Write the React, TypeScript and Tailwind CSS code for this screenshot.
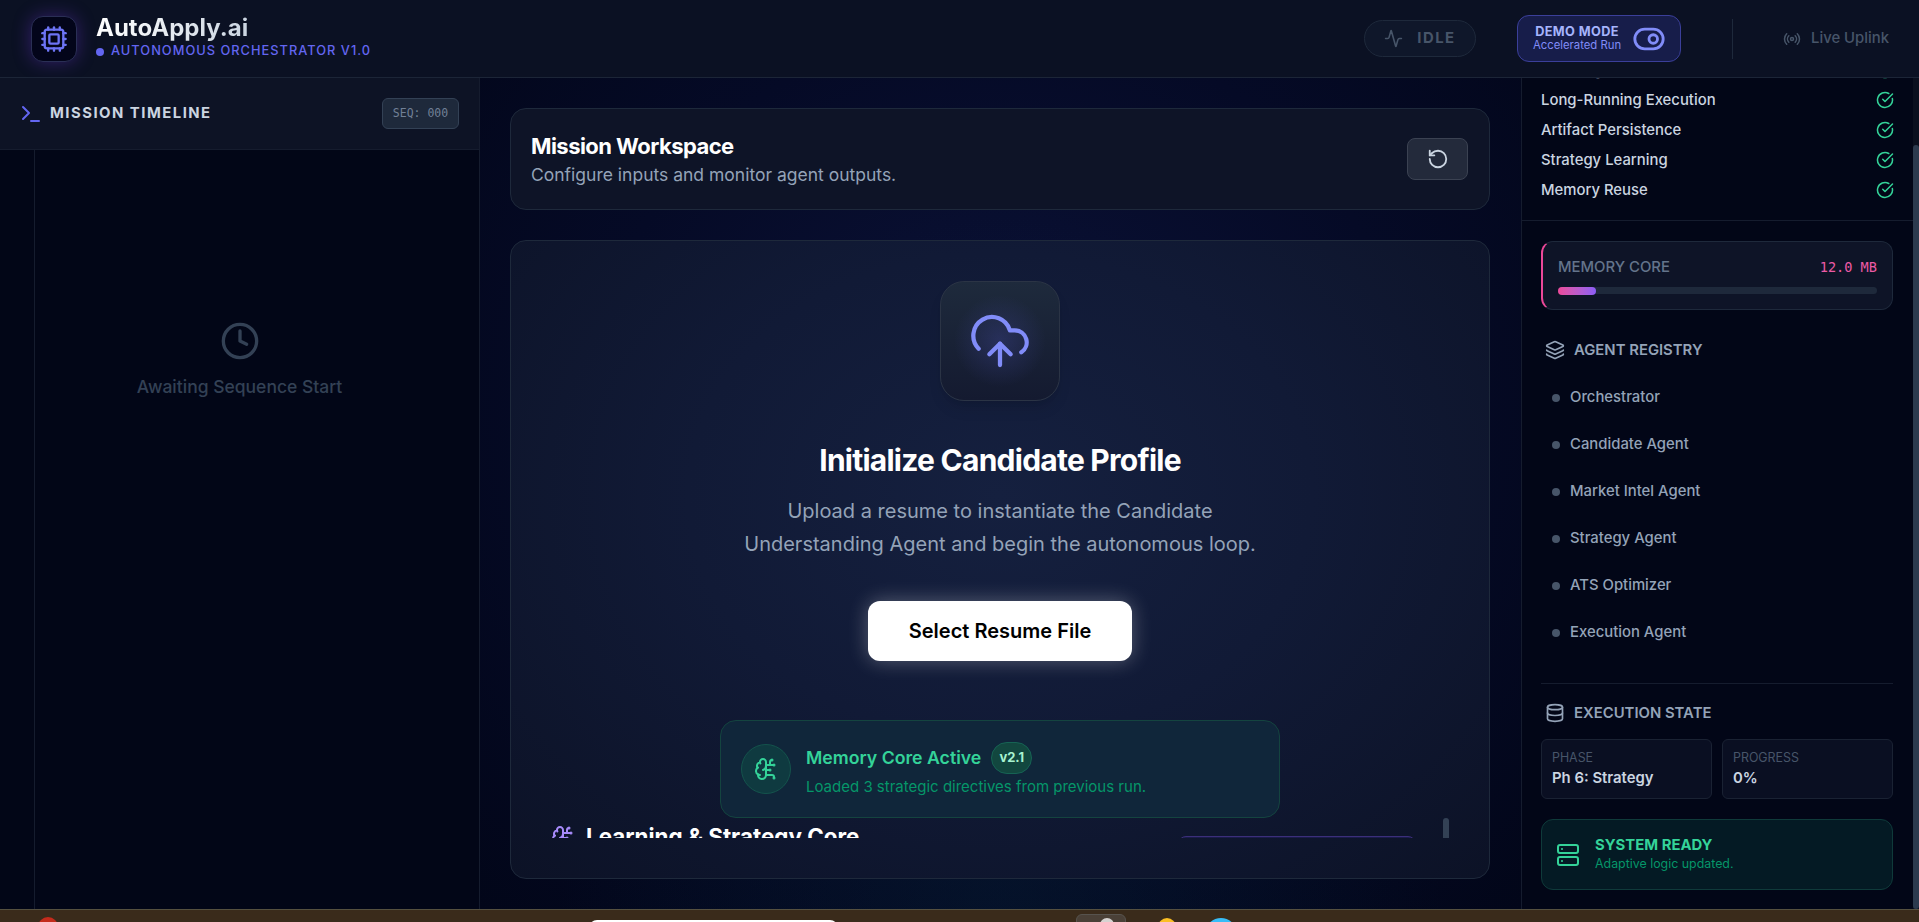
import React from "react";
import { Cpu, Terminal, Activity, ToggleRight, Radio, RotateCcw, CircleCheckBig, Layers, Database, Server, Clock, CloudUpload, BrainCircuit } from "lucide-react";

const checks = ["Multi-Agent Orchestration", "Long-Running Execution", "Artifact Persistence", "Strategy Learning", "Memory Reuse"];
const agents = ["Orchestrator", "Candidate Agent", "Market Intel Agent", "Strategy Agent", "ATS Optimizer", "Execution Agent"];

function Header() {
  return (
    <header className="h-[78px] shrink-0 flex items-center border-b border-[#1c2537] bg-[#0b1123] pl-[31px] pr-[30px]">
      <div className="w-[46px] h-[46px] rounded-xl bg-[#03051a] border border-[#2a2f55] flex items-center justify-center shadow-[0_0_18px_rgba(124,58,237,0.35)]">
        <Cpu size={28} className="text-[#6d74f5]" />
      </div>
      <div className="ml-[19px] mb-[6px] flex flex-col">
        <div className="text-2xl leading-[30px] font-bold text-transparent bg-clip-text bg-gradient-to-r from-white to-[#cbd5e1] w-fit">AutoApply.ai</div>
        <div className="flex items-center gap-[7px] text-[12.8px] leading-4 font-medium tracking-[0.08em] text-[#6366f1]">
          <span className="w-2 h-2 rounded-full bg-[#6366f1] mt-[3px]" />
          AUTONOMOUS ORCHESTRATOR V1.0
        </div>
      </div>
      <div className="ml-auto flex items-center">
        <div className="w-[112px] h-[37px] rounded-full border border-[#1e293b] bg-[#0f172a] flex items-center justify-center gap-[14px] text-[#475569]">
          <Activity size={19} />
          <span className="text-[14.875px] font-bold tracking-[0.1em]">IDLE</span>
        </div>
        <div className="ml-[41px] w-[164px] h-[47px] rounded-xl border border-[#3b3f9a] bg-[#171d4a] flex items-center pl-[15px] gap-[11px]">
          <div className="flex flex-col items-center">
            <span className="text-[12.75px] leading-[14px] font-bold tracking-[0.03em] text-[#a5b4fc]">DEMO MODE</span>
            <span className="text-[11.3px] leading-[13px] text-[#818cf8]">Accelerated Run</span>
          </div>
          <ToggleRight size={34} className="text-[#818cf8]" />
        </div>
        <div className="ml-[51px] w-px h-10 bg-[#1e293b]" />
        <div className="ml-[50px] flex items-center gap-[10px] text-[#475569]">
          <Radio size={18} />
          <span className="text-[14.875px] font-medium">Live Uplink</span>
        </div>
      </div>
    </header>
  );
}

function LeftPanel() {
  return (
    <aside className="w-[480px] shrink-0 h-full border-r border-[#151c2e] flex flex-col relative">
      <div className="h-[72px] shrink-0 border-b border-[#151c2e] bg-[#0d1325] flex items-center justify-between pl-[18px] pr-[20px]">
        <div className="flex items-center gap-[8px]">
          <Terminal size={24} className="text-[#6366f1] translate-x-[1px]" />
          <span className="text-[14.875px] font-bold tracking-[0.1em] text-[#cbd5e1]">MISSION TIMELINE</span>
        </div>
        <div className="w-[77px] h-[31px] rounded-md border border-[#334155] bg-[#1e293b] flex items-center justify-center text-[11.5px] text-[#718096] font-['DejaVu_Sans_Mono',monospace]">SEQ: 000</div>
      </div>
      <div className="flex-1 relative flex flex-col items-center pt-[171px]">
        <div className="absolute left-[34px] top-0 bottom-0 w-px bg-[#151c2e]" />
        <Clock size={40} className="text-[#334155]" />
        <div className="mt-[13px] text-[17.5px] leading-[26px] font-medium text-[#334155]">Awaiting Sequence Start</div>
      </div>
    </aside>
  );
}

function Main() {
  return (
    <main className="flex-1 min-w-0 h-full pl-[30px] pr-[31px] pt-[30px] pb-[30px] flex flex-col gap-[30px] bg-[radial-gradient(ellipse_at_50%_100%,rgba(6,40,60,0.3)_0%,rgba(6,40,60,0)_60%),radial-gradient(ellipse_at_50%_40%,#0b1238_0%,#050a26_55%,#020619_100%)]">
      <div className="h-[102px] shrink-0 rounded-2xl border border-[#1e293b] bg-[#0e1427] flex items-center justify-between pl-[20px] pr-[21px]">
        <div>
          <div className="text-[22px] leading-7 font-bold tracking-tight text-white">Mission Workspace</div>
          <div className="mt-[3px] text-[17.5px] leading-6 text-[#94a3b8]">Configure inputs and monitor agent outputs.</div>
        </div>
        <button className="w-[61px] h-[42px] rounded-lg border border-[#3b4252] bg-[#232a3b] flex items-center justify-center text-[#cbd5e1]">
          <RotateCcw size={22} />
        </button>
      </div>
      <div className="flex-1 min-h-0 rounded-2xl border border-[#1e293b] bg-[radial-gradient(ellipse_at_50%_40%,#15203f_0%,#111a36_45%,#0c1226_100%)] py-[40px] relative">
        <div className="h-full overflow-hidden flex flex-col items-center relative">
          <div className="w-[120px] h-[120px] shrink-0 rounded-3xl border border-[#2b3445] bg-[radial-gradient(circle_at_50%_50%,rgba(67,72,160,0.35)_0%,rgba(67,72,160,0)_55%),linear-gradient(to_bottom,#1e2a3c,#141a30)] flex items-center justify-center shadow-lg">
            <CloudUpload size={64} strokeWidth={1.6} className="text-[#818cf8]" />
          </div>
          <h2 className="mt-[41px] text-3xl leading-9 font-bold tracking-tight text-white">Initialize Candidate Profile</h2>
          <p className="mt-[17px] text-xl leading-[33px] text-[#94a3b8] text-center">
            Upload a resume to instantiate the Candidate
            <br />
            Understanding Agent and begin the autonomous loop.
          </p>
          <button className="mt-[40px] w-[264px] h-[60px] shrink-0 rounded-xl bg-white text-xl font-semibold text-black shadow-[0_0_20px_rgba(255,255,255,0.3)]">Select Resume File</button>
          <div className="mt-[59px] w-[560px] h-[98px] shrink-0 rounded-2xl border border-[#14443f] bg-[#10263a] flex items-center pl-[20px] gap-[15px]">
            <div className="w-[50px] h-[50px] rounded-full border border-[#14534c] bg-[#0f3a40] flex items-center justify-center text-[#34d399]">
              <BrainCircuit size={24} />
            </div>
            <div>
              <div className="flex items-center gap-[10px]">
                <span className="text-[17.7px] leading-6 font-semibold text-[#34d399]">Memory Core Active</span>
                <span className="w-[41px] h-[32px] rounded-full border border-[#166354] bg-[#12473f] flex items-center justify-center text-[13px] font-bold text-[#a7f3d0]">v2.1</span>
              </div>
              <div className="mt-[3px] text-[15px] leading-5 text-[#059669]">Loaded 3 strategic directives from previous run.</div>
            </div>
          </div>
          <div className="mt-[3px] w-full shrink-0 flex items-start justify-between pl-[40px] pr-[73px]">
            <div className="flex items-center gap-[11px]">
              <BrainCircuit size={24} className="text-[#a78bfa]" />
              <span className="text-[22.4px] leading-8 font-bold text-white">Learning &amp; Strategy Core</span>
            </div>
            <div className="mt-[15px] w-[238px] h-[60px] rounded-lg border border-[#3b2f7a] bg-[#1a1b4b]" />
          </div>
          <div className="absolute right-[40px] top-[537px] w-1.5 h-[24px] rounded-full bg-[#334155]" />
        </div>
      </div>
    </main>
  );
}

function RightPanel() {
  return (
    <aside className="w-[398px] shrink-0 h-full border-l border-[#151c2e] relative overflow-hidden">
      <div className="absolute right-0 top-0 bottom-0 w-[6px] bg-[#0a0f1e]">
        <div className="mt-[67px] h-[764px] w-full rounded-full bg-[#2c3a4e]" />
      </div>
      <div className="pr-[26px] pl-[19px] mt-[-23px]">
        <div className="flex flex-col">
          {checks.map((c) => (
            <div key={c} className="h-[30px] flex items-center justify-between text-[14.875px] font-medium text-[#cbd5e1]">
              <span>{c}</span>
              <CircleCheckBig size={18} className="text-[#34d399] -mr-[1px]" />
            </div>
          ))}
        </div>
      </div>
      <div className="mt-[15px] border-t border-[#151c2e] mr-[6px]" />
      <div className="pr-[26px] pl-[19px] pt-[20px]">
        <div className="h-[69px] rounded-xl border border-[#1e293b] border-l-2 border-l-[#ec4899] bg-[#0e1427] px-[15px] pt-[15px]">
          <div className="flex items-center justify-between leading-5">
            <span className="text-[14.875px] font-medium text-[#64748b]">MEMORY CORE</span>
            <span className="text-[13.6px] text-[#ec5aa5] font-['DejaVu_Sans_Mono',monospace]">12.0 MB</span>
          </div>
          <div className="mt-[10px] h-[7px] rounded-full bg-[#1e293b]">
            <div className="h-2 w-[12%] rounded-full bg-gradient-to-r from-[#ec4899] to-[#8b5cf6]" />
          </div>
        </div>
        <div className="mt-[30px] pl-[4px] flex items-center gap-[9px] text-[14.875px] leading-5 font-semibold text-[#94a3b8]">
          <Layers size={20} />
          AGENT REGISTRY
        </div>
        <div className="mt-[14px] flex flex-col">
          {agents.map((a) => (
            <div key={a} className="h-[47px] flex items-center pl-[11px] gap-[10px] text-[14.875px] font-medium text-[#94a3b8]">
              <span className="w-2 h-2 rounded-full bg-[#475569]" />
              {a}
            </div>
          ))}
        </div>
        <div className="mt-[27px] border-t border-[#151c2e]" />
        <div className="mt-[19px] pl-[4px] flex items-center gap-[9px] text-[14.875px] leading-5 font-semibold text-[#94a3b8]">
          <Database size={20} />
          EXECUTION STATE
        </div>
        <div className="mt-[16px] grid grid-cols-2 gap-[10px]">
          <div className="h-[60px] rounded-md border border-[#1a2233] bg-[#0a0f22] px-[10px] pt-[10px]">
            <div className="text-[12.4px] leading-4 text-[#475569]">PHASE</div>
            <div className="mt-[4px] text-[14.875px] leading-4 font-semibold text-[#cbd5e1]">Ph 6: Strategy</div>
          </div>
          <div className="h-[60px] rounded-md border border-[#1a2233] bg-[#0a0f22] px-[10px] pt-[10px]">
            <div className="text-[12.4px] leading-4 text-[#475569]">PROGRESS</div>
            <div className="mt-[4px] text-[14.875px] leading-4 font-semibold text-[#cbd5e1]">0%</div>
          </div>
        </div>
        <div className="mt-[20px] h-[71px] rounded-xl border border-[#0f3a3a] bg-[#041a24] flex items-center pl-[14px] gap-[15px]">
          <Server size={24} className="text-[#34d399]" />
          <div>
            <div className="text-[14.875px] leading-[18px] font-bold text-[#34d399]">SYSTEM READY</div>
            <div className="mt-px text-[12.4px] leading-[18px] text-[#059669]">Adaptive logic updated.</div>
          </div>
        </div>
      </div>
    </aside>
  );
}

function Taskbar() {
  return (
    <div className="h-[13px] shrink-0 border-t border-[#55503f] bg-[#3a2b1b] flex overflow-hidden">
      <div className="ml-[38px] mt-[7px] w-5 h-5 shrink-0 rounded-full bg-[#c42b1c]" />
      <div className="ml-[531px] mt-[10px] w-[249px] h-8 shrink-0 rounded-lg bg-white" />
      <div className="ml-[238px] mt-[4px] w-[50px] h-10 shrink-0 rounded-md border border-[#57534e] bg-[#4a4037] flex justify-center">
        <div className="mt-[3px] ml-[12px] w-[14px] h-5 rounded-t-full bg-[#d6d3d1]" />
      </div>
      <div className="ml-[32px] mt-[8px] w-[18px] h-[18px] shrink-0 rounded-full bg-[#fbbf24]" />
      <div className="ml-[29px] mt-[8px] w-[32px] h-[32px] shrink-0 rounded-full bg-[#38bdf8]" />
    </div>
  );
}

export default function App() {
  return (
    <div className="w-full h-[922px] overflow-hidden flex flex-col bg-[#020617] font-['Inter',sans-serif]">
      <Header />
      <div className="flex-1 min-h-0 flex bg-[#020617]">
        <LeftPanel />
        <Main />
        <RightPanel />
      </div>
      <Taskbar />
    </div>
  );
}
